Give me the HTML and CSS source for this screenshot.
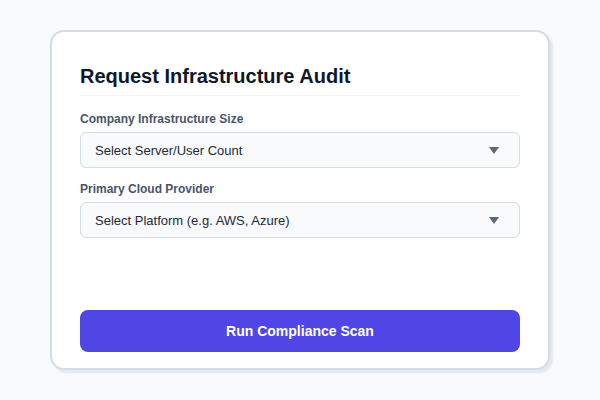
FILE: index.html
```html
<!DOCTYPE html>
<html lang="en">
<head>
    <meta charset="UTF-8">
    <meta name="viewport" content="width=device-width, initial-scale=1.0">
    <title>Infrastructure Audit</title>
    <link rel="stylesheet" href="styles.css">
</head>
<body>
    <div class="audit-card">
        <h1 class="audit-title">Request Infrastructure Audit</h1>

        <div class="field">
            <label class="field-label">Company Infrastructure Size</label>
            <div class="select-box">
                <span>Select Server/User Count</span>
                <span class="arrow"></span>
            </div>
        </div>

        <div class="field">
            <label class="field-label">Primary Cloud Provider</label>
            <div class="select-box">
                <span>Select Platform (e.g. AWS, Azure)</span>
                <span class="arrow"></span>
            </div>
        </div>

        <button class="scan-button">Run Compliance Scan</button>
    </div>
</body>
</html>
```

FILE: styles.css
```css
body {
    margin: 0;
    height: 400px;
    display: flex;
    justify-content: center;
    align-items: center;
    background: #f8fafc;
    font-family: "Liberation Sans", Arial, sans-serif;
    color: #0f172a;
}

.audit-card {
    box-sizing: border-box;
    width: 500px;
    height: 340px;
    display: flex;
    flex-direction: column;
    background: white;
    border: 2px solid #d3dce8;
    border-radius: 14px;
    box-shadow: 3px 3px 2px #e2e8f0;
    padding: 32px 28px 16px;
}

.audit-title {
    margin: 0;
    font-size: 20px;
    line-height: 24px;
    font-weight: bold;
    color: #0f172a;
    padding-bottom: 7px;
    border-bottom: 1px solid #f1f5f9;
}

.field {
    margin-top: 16px;
}

.field + .field {
    margin-top: 14px;
}

.field-label {
    display: block;
    font-size: 12px;
    line-height: 14px;
    font-weight: bold;
    color: #475569;
    margin-bottom: 6px;
}

.select-box {
    box-sizing: border-box;
    height: 36px;
    display: flex;
    align-items: center;
    justify-content: space-between;
    padding: 0 20px 0 14px;
    background: #f8fafc;
    border: 1px solid #d3dce8;
    border-radius: 6px;
    font-size: 13px;
    color: #1e293b;
}

.arrow {
    width: 0;
    height: 0;
    border-left: 5px solid transparent;
    border-right: 5px solid transparent;
    border-top: 7px solid #5b6779;
}

.scan-button {
    margin-top: auto;
    height: 42px;
    border: none;
    border-radius: 8px;
    background: #4f46e5;
    color: white;
    font-family: inherit;
    font-size: 14px;
    font-weight: bold;
}
```
